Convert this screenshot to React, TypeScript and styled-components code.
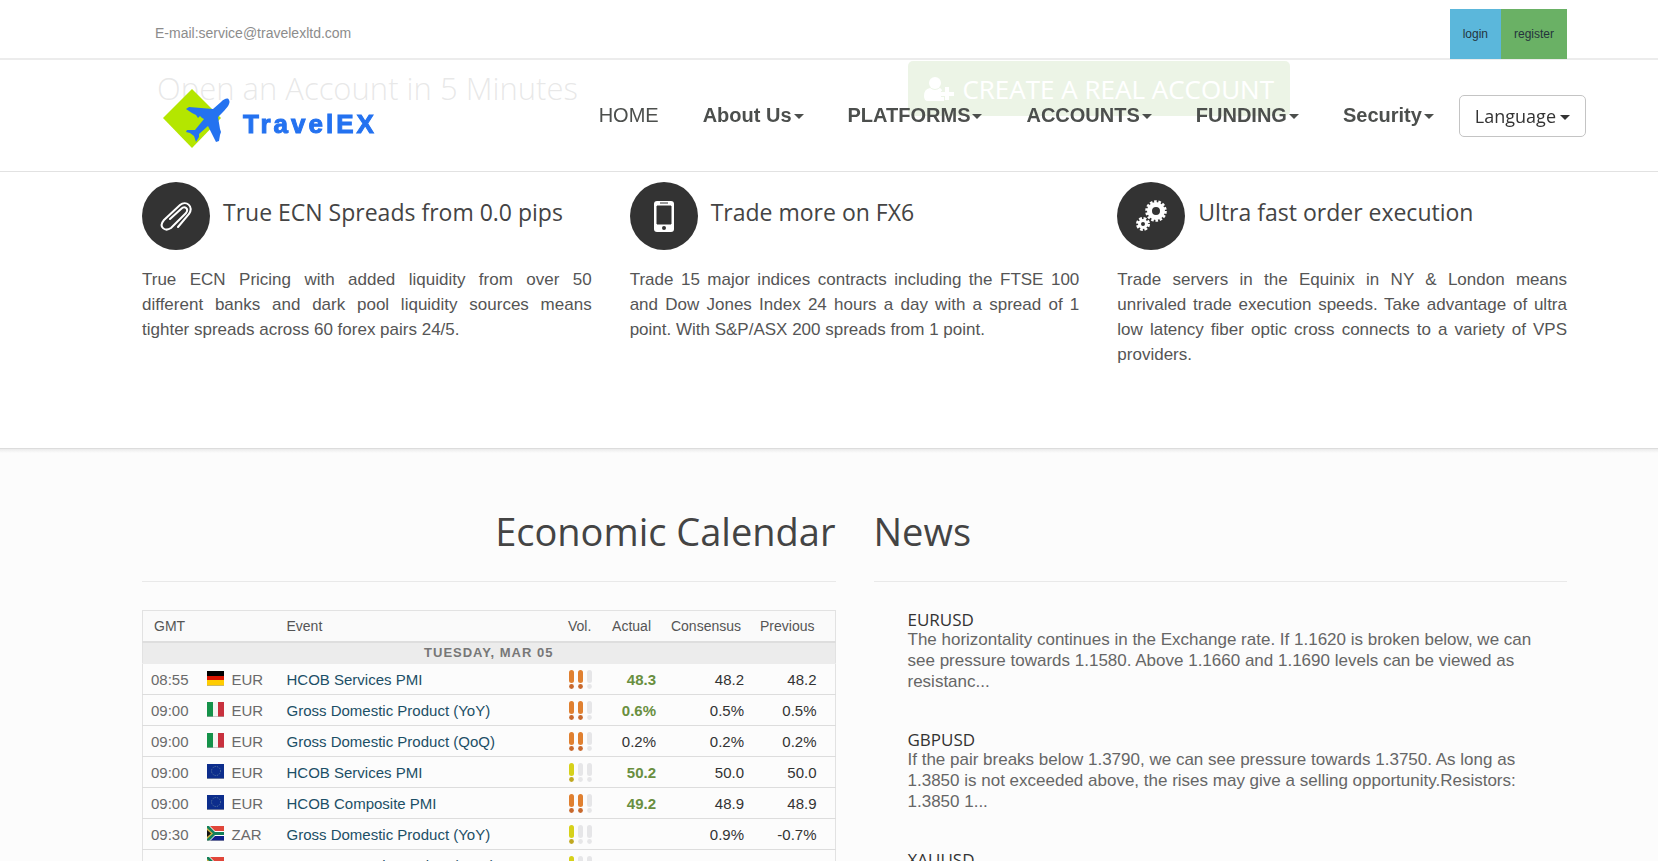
import React from "react";
import styled, { createGlobalStyle } from "styled-components";

const arial = `"Liberation Sans", Arial, sans-serif`;
const openSans = `"Open Sans", "Noto Sans", sans-serif`;

const Global = createGlobalStyle`
  *, *::before, *::after { box-sizing: border-box; }
  html, body { margin: 0; background: #fff; }
  body { font-family: ${arial}; color: #555; overflow: hidden; }
  h2, h3, p { margin: 0; font-weight: 400; }
  a { color: inherit; text-decoration: none; }
  button { font: inherit; cursor: pointer; }
`;

const Page = styled.div`
  height: 100vh;
  overflow: hidden;
`;

const Header = styled.header`
  position: fixed;
  inset: 0 0 auto 0;
  z-index: 2;
  background: rgba(255, 255, 255, 0.88);
  border-bottom: 1px solid #e2e2e2;
`;

const TopBar = styled.div`
  display: flex;
  justify-content: space-between;
  align-items: flex-end;
  height: 60px;
  padding: 0 91px 0 155px;
  background: #fff;
  border-bottom: 2px solid #ececec;
`;

const Email = styled.a`
  font-size: 14px;
  line-height: 16px;
  color: #8c8c8c;
  margin-bottom: 17px;
`;

const AuthLinks = styled.div`
  display: flex;
  margin-bottom: -1px;
`;

const AuthLink = styled.a<{ $bg: string }>`
  padding: 0 13px;
  font-size: 12px;
  line-height: 50px;
  color: #25343c;
  background: ${(p) => p.$bg};
`;

const NavBar = styled.div`
  display: flex;
  justify-content: space-between;
  align-items: flex-start;
  height: 111px;
  padding: 28px 72px 0 161px;
`;

const Brand = styled.a`
  display: block;
  svg { display: block; }
`;

const Nav = styled.nav`
  display: flex;
  align-items: flex-start;
`;

const NavLink = styled.a<{ $bold?: boolean }>`
  display: flex;
  align-items: center;
  gap: 2px;
  margin-right: 44px;
  font-size: 20px;
  line-height: 54px;
  font-weight: ${(p) => (p.$bold ? 700 : 400)};
  color: #4c4f4d;
  &:last-of-type { margin-right: 25px; }
`;

const Caret = styled.span`
  width: 0;
  height: 0;
  margin-top: 2px;
  border: 5px solid transparent;
  border-top-color: currentColor;
  border-bottom: 0;
`;

const LanguageButton = styled.button`
  display: flex;
  align-items: center;
  gap: 4px;
  height: 42px;
  margin-top: 7px;
  padding: 0 15px;
  border: 1px solid #c4c4c4;
  border-radius: 5px;
  background: #fff;
  font-family: ${openSans};
  font-size: 18px;
  color: #333;
`;

const Banner = styled.section`
  display: flex;
  justify-content: space-between;
  align-items: flex-start;
  padding: 61px 368px 0 157px;
  height: 177px;
`;

const BannerTitle = styled.h2`
  padding-top: 6px;
  font-family: ${openSans};
  font-weight: 300;
  font-size: 31px;
  line-height: 42px;
  color: #444;
`;

const CreateButton = styled.button`
  display: flex;
  align-items: center;
  gap: 7px;
  height: 55px;
  padding: 0 16px;
  border: 0;
  border-radius: 5px;
  background: #62a537;
  font-family: ${openSans};
  font-size: 26px;
  color: #fff;
`;

const Features = styled.section`
  display: grid;
  grid-template-columns: repeat(3, 1fr);
  gap: 38px;
  padding: 5px 91px 81px 142px;
`;

const FeatureHead = styled.div`
  display: flex;
  align-items: center;
  gap: 13px;
`;

const Disc = styled.span`
  display: grid;
  place-items: center;
  width: 68px;
  height: 68px;
  flex: none;
  border-radius: 50%;
  background: #333;
`;

const FeatureTitle = styled.h3`
  padding-bottom: 8px;
  font-family: ${openSans};
  font-size: 23px;
  line-height: 32px;
  color: #444;
`;

const FeatureText = styled.p`
  margin-top: 17px;
  font-size: 17px;
  line-height: 25px;
  text-align: justify;
  color: #555;
`;

const OpeningLine = styled.span`
  display: block;
  text-align-last: justify;
`;

const Lower = styled.section`
  display: grid;
  grid-template-columns: 1fr 1fr;
  gap: 38px;
  padding: 57px 91px 0 142px;
  background: linear-gradient(#ebebeb, #fcfcfc 4px);
  border-top: 1px solid #dcdcdc;
`;

const SectionTitle = styled.h2<{ $align: "left" | "right" }>`
  padding-bottom: 25px;
  margin-bottom: 28px;
  border-bottom: 1px solid #e9e9e9;
  font-family: ${openSans};
  font-size: 38px;
  line-height: 50px;
  text-align: ${(p) => p.$align};
  color: #444;
`;

const Calendar = styled.table`
  width: 100%;
  border-collapse: collapse;
  table-layout: fixed;
  border: 1px solid #e2e2e2;
  font-size: 15px;
  th { font-size: 14px; font-weight: 400; text-align: left; height: 31px; padding: 0; color: #555; background: #fafafa; }
  thead th.num { text-align: right; }
  td { height: 31px; padding: 0; border-top: 1px solid #ddd; }
  tbody tr:nth-child(2) td { border-top-color: #ececec; }
`;

const DayCell = styled.th`
  && {
    height: 22px;
    border-top: 2px solid #dedede;
    background: #ececec;
    font-size: 13px;
    font-weight: 700;
    letter-spacing: 1px;
    text-align: center;
    color: #777;
  }
`;

const TimeCell = styled.td`
  && { padding-left: 8px; }
  color: #6a6a6a;
`;

const Country = styled.div`
  display: flex;
  align-items: center;
  gap: 8px;
  color: #6a6a6a;
  svg { margin-top: -2px; }
`;

const EventLink = styled.a`
  color: #1b4f66;
`;

const NumCell = styled.td<{ $pad: number; $good?: boolean }>`
  && { padding-right: ${(p) => p.$pad}px; }
  text-align: right;
  font-weight: ${(p) => (p.$good ? 700 : 400)};
  color: ${(p) => (p.$good ? "#698f3f" : "#333")};
`;

const HeadCell = styled.th<{ $l?: number; $r?: number }>`
  && { padding-left: ${(p) => p.$l ?? 0}px; padding-right: ${(p) => p.$r ?? 0}px; }
`;

const Marks = styled.svg`
  display: block;
  margin-left: 1px;
`;

const NewsList = styled.div`
  padding: 0 20px 0 34px;
`;

const NewsItem = styled.article`
  margin-bottom: 38px;
`;

const NewsTitle = styled.h3`
  font-family: ${openSans};
  font-size: 17px;
  line-height: 19px;
  color: #333;
`;

const NewsText = styled.p`
  font-size: 17px;
  line-height: 21px;
  color: #666;
`;

const Logo = () => (
  <svg width="222" height="62" viewBox="0 0 222 62" role="img" aria-label="TravelEX">
    <path d="M31 1L60 30L31 60L2 30Z" fill="#b4e600" />
    <path
      fill="#2472f0"
      d="M68 12C70 15 66 20 62 24L57 29L59 41L60 44L59 47L58 53L55 54L47 38L38 46L38 49L35 54L33 48L29 45L25 44L26 42L34 42L43 31L41 30L39 28L37 30L35 27L31 25L25 21L28 19L52 21L60 14C63 11 67 9 68 12Z"
    />
    <text x="82" y="45" fontFamily="Liberation Sans, Arial, sans-serif" fontWeight="700" fontSize="26" letterSpacing="3" fill="#2472f0" stroke="#2472f0">TravelEX</text>
  </svg>
);

const UserPlus = () => (
  <svg width="31" height="24" viewBox="0 0 31 24" fill="#fff" aria-hidden="true">
    <circle cx="11" cy="6" r="6" />
    <path d="M6 11Q11 15 16 11Q18 12 18 14H17V20H20V24H4Q0 24 0 19Q0 12 6 11Z" />
    <path d="M21 10H25V15H30V19H25V23H21V19H17V15H21Z" />
  </svg>
);

const Clip = () => (
  <svg width="32" height="30" viewBox="0 0 32 30" fill="none" stroke="#fff" strokeWidth="2" strokeLinecap="round" aria-hidden="true">
    <path d="M18 26L29 13C34 5 26 -1 20 4L4 19C-2 26 5 31 11 27L26 12C29 8 25 4 21 8L10 18" />
  </svg>
);

const Phone = () => (
  <svg width="20" height="31" viewBox="0 0 20 31" aria-hidden="true">
    <rect width="20" height="31" rx="3" fill="#fff" />
    <path d="M6 2H14M3 5H17V23H3Z" fill="#333" stroke="#333" strokeWidth="1" />
    <circle cx="10" cy="27" r="2" fill="#333" />
  </svg>
);

const Gears = () => (
  <svg width="32" height="32" viewBox="0 0 32 32" fill="none" stroke="#fff" aria-hidden="true">
    <circle cx="21" cy="11" r="6.5" strokeWidth="5" />
    <circle cx="21" cy="11" r="9.5" strokeWidth="2.6" strokeDasharray="2.6 1.66" />
    <circle cx="8" cy="24" r="3.5" strokeWidth="3" />
    <circle cx="8" cy="24" r="5.5" strokeWidth="3" strokeDasharray="2.7 1.6" />
  </svg>
);

type FlagName = "de" | "it" | "eu" | "za";
const Flag = ({ name }: { name: FlagName }) => (
  <svg width="17" height="15" viewBox="0 0 17 15" aria-hidden="true">
    {name === "de" && (
      <>
        <rect width="17" height="5" fill="#000" />
        <rect y="5" width="17" height="5" fill="#d91400" />
        <rect y="9" width="17" height="6" fill="#fc0" />
      </>
    )}
    {name === "it" && (
      <>
        <rect width="17" height="15" fill="#f4f4f2" />
        <rect width="6" height="15" fill="#15924a" />
        <rect x="11" width="6" height="15" fill="#c8313e" />
      </>
    )}
    {name === "eu" && (
      <>
        <rect width="17" height="15" fill="#0c2d8c" />
        <circle cx="9" cy="7" r="4.5" fill="none" stroke="#5878a0" strokeDasharray="1.2 1.2" />
      </>
    )}
    {name === "za" && (
      <>
        <rect width="17" height="15" fill="#fff" />
        <path d="M3 0H17V5H8Z" fill="#e0463a" />
        <path d="M3 15H17V10H8Z" fill="#10208c" />
        <path d="M0 0H2L8 6H17V9H8L2 15H0Z" fill="#14805a" />
        <path d="M0 2L6 7.5L0 13Z" fill="#d0b040" />
        <path d="M0 4L4 7.5L0 11Z" fill="#111" />
      </>
    )}
    <path d="M0 14.5H17" stroke="#aaa" strokeOpacity=".6" />
  </svg>
);

const Volatility = ({ level }: { level: number }) => {
  const [bar, dot] = level === 1 ? ["#d6d11a", "#c0a820"] : ["#e08030", "#c8682c"];
  return (
    <Marks width="23" height="19" viewBox="0 0 23 19" role="img" aria-label={`Volatility ${level}`}>
      {[0, 1, 2].map((i) => (
        <g key={i} transform={`translate(${i * 9} 0)`}>
          <rect width="5" height="13" rx="2.5" fill={i < level ? bar : "#e6e6e8"} />
          <circle cx="2.5" cy="16.5" r="2.4" fill={i < level ? dot : "#e6e6e8"} />
        </g>
      ))}
    </Marks>
  );
};

const menu = ["About Us", "PLATFORMS", "ACCOUNTS", "FUNDING", "Security"];

type Feature = { icon: React.ReactNode; title: string; opening?: string; text: string };
const features: Feature[] = [
  {
    icon: <Clip />,
    title: "True ECN Spreads from 0.0 pips",
    opening: "True ECN Pricing with added liquidity from over 50",
    text: "different banks and dark pool liquidity sources means tighter spreads across 60 forex pairs 24/5.",
  },
  {
    icon: <Phone />,
    title: "Trade more on FX6",
    text: "Trade 15 major indices contracts including the FTSE 100 and Dow Jones Index 24 hours a day with a spread of 1 point. With S&P/ASX 200 spreads from 1 point.",
  },
  {
    icon: <Gears />,
    title: "Ultra fast order execution",
    text: "Trade servers in the Equinix in NY & London means unrivaled trade execution speeds. Take advantage of ultra low latency fiber optic cross connects to a variety of VPS providers.",
  },
];

type Row = { time: string; flag: FlagName; cur: string; event: string; vol: number; actual: string; good?: boolean; cons: string; prev: string };
const rows: Row[] = [
  { time: "08:55", flag: "de", cur: "EUR", event: "HCOB Services PMI", vol: 2, actual: "48.3", good: true, cons: "48.2", prev: "48.2" },
  { time: "09:00", flag: "it", cur: "EUR", event: "Gross Domestic Product (YoY)", vol: 2, actual: "0.6%", good: true, cons: "0.5%", prev: "0.5%" },
  { time: "09:00", flag: "it", cur: "EUR", event: "Gross Domestic Product (QoQ)", vol: 2, actual: "0.2%", cons: "0.2%", prev: "0.2%" },
  { time: "09:00", flag: "eu", cur: "EUR", event: "HCOB Services PMI", vol: 1, actual: "50.2", good: true, cons: "50.0", prev: "50.0" },
  { time: "09:00", flag: "eu", cur: "EUR", event: "HCOB Composite PMI", vol: 2, actual: "49.2", good: true, cons: "48.9", prev: "48.9" },
  { time: "09:30", flag: "za", cur: "ZAR", event: "Gross Domestic Product (YoY)", vol: 1, actual: "", cons: "0.9%", prev: "-0.7%" },
  { time: "09:30", flag: "za", cur: "ZAR", event: "Gross Domestic Product (QoQ)", vol: 1, actual: "", cons: "0.2%", prev: "-0.2%" },
];

const news = [
  { pair: "EURUSD", text: "The horizontality continues in the Exchange rate. If 1.1620 is broken below, we can see pressure towards 1.1580. Above 1.1660 and 1.1690 levels can be viewed as resistanc..." },
  { pair: "GBPUSD", text: "If the pair breaks below 1.3790, we can see pressure towards 1.3750. As long as 1.3850 is not exceeded above, the rises may give a selling opportunity.Resistors: 1.3850 1..." },
  { pair: "XAUUSD", text: "" },
];

export default function App() {
  return (
    <Page>
      <Global />
      <Header>
        <TopBar>
          <Email href="mailto:service@travelexltd.com">E-mail:service@travelexltd.com</Email>
          <AuthLinks>
            <AuthLink href="#login" $bg="#5bb7db">login</AuthLink>
            <AuthLink href="#register" $bg="#6ab165">register</AuthLink>
          </AuthLinks>
        </TopBar>
        <NavBar>
          <Brand href="#home"><Logo /></Brand>
          <Nav>
            <NavLink href="#home">HOME</NavLink>
            {menu.map((m) => (
              <NavLink key={m} href={`#${m}`} $bold>{m}<Caret /></NavLink>
            ))}
            <LanguageButton type="button">Language<Caret /></LanguageButton>
          </Nav>
        </NavBar>
      </Header>
      <main>
        <Banner>
          <BannerTitle>Open an Account in 5 Minutes</BannerTitle>
          <CreateButton type="button"><UserPlus />CREATE A REAL ACCOUNT</CreateButton>
        </Banner>
        <Features>
          {features.map((f) => (
            <article key={f.title}>
              <FeatureHead><Disc>{f.icon}</Disc><FeatureTitle>{f.title}</FeatureTitle></FeatureHead>
              <FeatureText>
                {f.opening && <OpeningLine>{f.opening}</OpeningLine>}
                {f.text}
              </FeatureText>
            </article>
          ))}
        </Features>
        <Lower>
          <section>
            <SectionTitle $align="right">Economic Calendar</SectionTitle>
            <Calendar>
              <colgroup>
                <col width="64" /><col width="80" /><col /><col width="30" /><col width="58" /><col width="88" /><col width="91" />
              </colgroup>
              <thead>
                <tr>
                  <HeadCell $l={11}>GMT</HeadCell>
                  <th aria-label="Country" />
                  <HeadCell>Event</HeadCell>
                  <HeadCell>Vol.</HeadCell>
                  <HeadCell className="num" $r={5}>Actual</HeadCell>
                  <HeadCell className="num" $r={3}>Consensus</HeadCell>
                  <HeadCell className="num" $r={20}>Previous</HeadCell>
                </tr>
              </thead>
              <tbody>
                <tr><DayCell colSpan={7}>TUESDAY, MAR 05</DayCell></tr>
                {rows.map((r, i) => (
                  <tr key={i}>
                    <TimeCell>{r.time}</TimeCell>
                    <td><Country><Flag name={r.flag} />{r.cur}</Country></td>
                    <td><EventLink href="#event">{r.event}</EventLink></td>
                    <td><Volatility level={r.vol} /></td>
                    <NumCell $pad={0} $good={r.good}>{r.actual}</NumCell>
                    <NumCell $pad={0}>{r.cons}</NumCell>
                    <NumCell $pad={18}>{r.prev}</NumCell>
                  </tr>
                ))}
              </tbody>
            </Calendar>
          </section>
          <section>
            <SectionTitle $align="left">News</SectionTitle>
            <NewsList>
              {news.map((n) => (
                <NewsItem key={n.pair}><NewsTitle>{n.pair}</NewsTitle><NewsText>{n.text}</NewsText></NewsItem>
              ))}
            </NewsList>
          </section>
        </Lower>
      </main>
    </Page>
  );
}
